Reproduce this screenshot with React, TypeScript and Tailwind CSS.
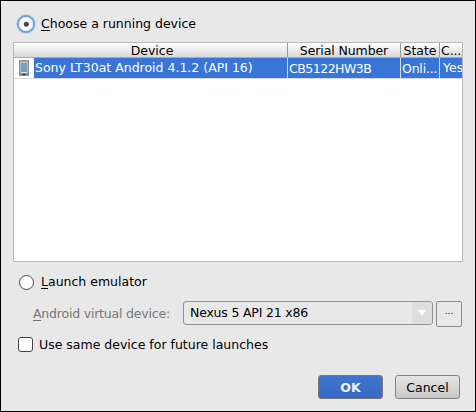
import React from "react";

function Label({ mnemonic, rest }: { mnemonic: string; rest: string }) {
  return (
    <span className="whitespace-pre leading-4">
      <span className="border-b border-current inline-block h-[15px] leading-4">{mnemonic}</span>
      {rest}
    </span>
  );
}

function PhoneIcon() {
  return (
    <svg width="10" height="16" viewBox="0 0 10 16" className="shrink-0">
      <rect width="10" height="16" rx="1" fill="#8f8d8c" />
      <rect x="1.6" y="1.7" width="6.8" height="11.3" fill="#f4f6f7" />
      <rect x="2.3" y="2.6" width="5.4" height="9.6" fill="#4b87a8" />
      <rect x="3" y="3.2" width="4" height="8.4" fill="#6ca5c7" />
      <rect x="4" y="14" width="2" height="1" fill="#000" />
    </svg>
  );
}

export default function App() {
  return (
    <div className="flex h-[412px] w-[476px] flex-col overflow-hidden border border-black bg-[#e8e8e8] font-['DejaVu_Sans',sans-serif] text-[12.5px] leading-4 text-black whitespace-nowrap">
      <div className="flex h-[41px] shrink-0 items-center pl-[15px] pt-[4px]">
        <svg width="20" height="20" viewBox="0 0 20 20">
          <circle cx="10" cy="10" r="9.8" fill="#b3cdee" />
          <circle cx="10" cy="10" r="8" fill="#fff" stroke="#6b9fde" strokeWidth="1.8" />
          <circle cx="10" cy="10" r="6.7" fill="none" stroke="#d6e5f7" />
          <circle cx="10.3" cy="10.2" r="2.5" fill="#444" />
        </svg>
        <div className="ml-[5px]"><Label mnemonic="C" rest="hoose a running device" /></div>
      </div>

      <div className="ml-3 flex h-[220px] w-[450px] shrink-0 flex-col border border-[#b9b9b9] bg-white">
        <div className="flex h-[15px] shrink-0 border-b border-[#aaa] bg-linear-to-b from-white to-[#d9d9d9] leading-[16px]">
          <div className="w-[274px] border-r border-[#999] pl-[3px] text-center">Device</div>
          <div className="w-[113px] border-r border-[#999] text-center tracking-[-0.1px]">Serial Number</div>
          <div className="w-[39px] border-r border-[#999] text-center">State</div>
          <div className="w-[22px] pl-px tracking-[-0.1px]">C...</div>
        </div>
        <div className="flex h-[21px] shrink-0 border-b border-[#d8d8d8] text-white">
          <div className="flex w-5 items-center justify-center"><PhoneIcon /></div>
          <div className="w-[254px] border-r border-[#d8d8d8] bg-[#3875d7] pl-px leading-[19px]">Sony LT30at Android 4.1.2 (API 16)</div>
          <div className="w-[113px] border-r border-[#d8d8d8] bg-[#3875d7] pl-px leading-[21px] tracking-[-0.5px]">CB5122HW3B</div>
          <div className="w-[39px] border-r border-[#d8d8d8] bg-[#3875d7] pl-px leading-[21px] tracking-[-0.2px]">Onli...</div>
          <div className="w-[22px] overflow-hidden bg-[#3875d7] pl-[3px] leading-[19px]">Yes</div>
        </div>
      </div>

      <div className="flex h-[40px] shrink-0 items-center pl-[18px]">
        <div className="size-[15px] rounded-full border border-[#444] bg-white" />
        <div className="ml-[7px]"><Label mnemonic="L" rest="aunch emulator" /></div>
      </div>

      <div className="flex h-[26px] shrink-0 pl-8">
        <div className="w-[150px] pt-[4px] text-[#777] tracking-[-0.2px]"><Label mnemonic="A" rest="ndroid virtual device:" /></div>
        <div className="mt-[-1px] flex h-6 w-[250px] overflow-hidden rounded-[3px] border border-[#929292]">
          <div className="flex-1 pl-[6px] leading-[22px] tracking-[-0.2px]">Nexus 5 API 21 x86</div>
          <div className="flex w-5 items-center justify-center bg-[#dedede]">
            <svg width="8" height="6" viewBox="0 0 8 6"><path d="M0 0h8L4 6z" fill="#fff" /></svg>
          </div>
        </div>
        <div className="ml-[3px] mt-[-1px] h-[26px] w-[26px] rounded-[2px] border border-[#8c8c8c] text-center text-[9px] leading-[18px]">...</div>
      </div>

      <div className="flex h-[32px] shrink-0 items-center pl-[17px]">
        <div className="size-[15px] rounded-[3px] border border-[#444] bg-white" />
        <div className="ml-[6px] pt-px">Use same device for future launches</div>
      </div>

      <div className="mt-[15px] flex gap-3 pl-[317px]">
        <div className="h-6 w-[65px] rounded-[3px] border border-[#777] bg-linear-to-b from-[#4075d0] to-[#3669c4] text-center font-bold leading-[23px] text-[#eef3fb]">OK</div>
        <div className="h-6 w-[65px] rounded-[3px] border border-[#858585] bg-linear-to-b from-[#e6e6e6] to-[#c8c8c8] text-center leading-[23px]">Cancel</div>
      </div>
    </div>
  );
}
